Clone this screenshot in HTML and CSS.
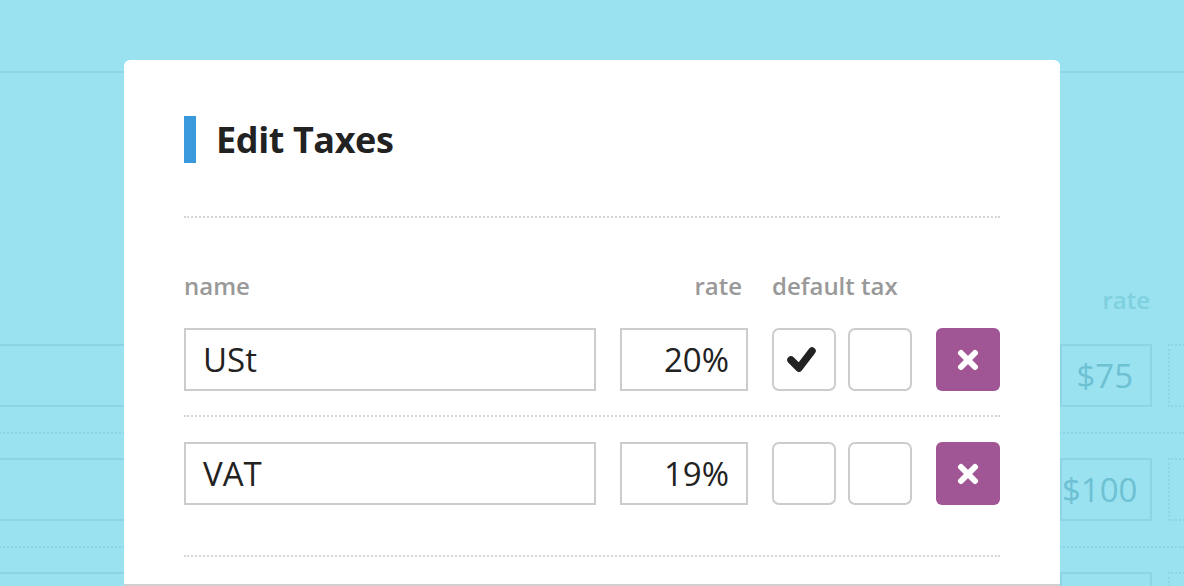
FILE: index.html
```html
<!DOCTYPE html>
<html lang="en">
<head>
<meta charset="utf-8">
<title>Edit Taxes</title>
<link rel="stylesheet" href="styles.css">
</head>
<body>
<div class="bg-page">
  <div class="bg-topbar"></div>
  <div class="bg-head"><span class="bg-label">rate</span></div>
  <div class="bg-row">
    <div class="bg-box"></div>
    <div class="bg-box bg-amount">$75</div>
    <div class="bg-box bg-dotted"></div>
  </div>
  <div class="bg-row">
    <div class="bg-box"></div>
    <div class="bg-box bg-amount">$100</div>
    <div class="bg-box bg-dotted"></div>
  </div>
  <div class="bg-row">
    <div class="bg-box"></div>
    <div class="bg-box bg-amount"></div>
    <div class="bg-box bg-dotted"></div>
  </div>
</div>

<div class="modal">
  <div class="modal-body">
    <h1 class="modal-title">Edit Taxes</h1>
    <div class="sep sep-head"></div>
    <div class="row labels">
      <span class="lbl col-name">name</span>
      <span class="lbl col-rate lbl-right">rate</span>
      <span class="lbl lbl-default">default tax</span>
    </div>
    <div class="row tax-row">
      <div class="field col-name">USt</div>
      <div class="field col-rate field-rate">20%</div>
      <div class="checks">
        <div class="check">
          <svg width="60" height="59" viewBox="2 2 60 59"><polyline points="19,32 27,40 40,23" fill="none" stroke="#222" stroke-width="7.5" stroke-linecap="round" stroke-linejoin="round"/></svg>
        </div>
        <div class="check"></div>
      </div>
      <div class="del">
        <svg width="22" height="22" viewBox="0 0 22 22"><path d="M4 4 L18 18 M18 4 L4 18" stroke="#fff" stroke-width="6" stroke-linecap="round"/></svg>
      </div>
    </div>
    <div class="sep sep-row"></div>
    <div class="row tax-row">
      <div class="field col-name">VAT</div>
      <div class="field col-rate field-rate">19%</div>
      <div class="checks">
        <div class="check"></div>
        <div class="check"></div>
      </div>
      <div class="del">
        <svg width="22" height="22" viewBox="0 0 22 22"><path d="M4 4 L18 18 M18 4 L4 18" stroke="#fff" stroke-width="6" stroke-linecap="round"/></svg>
      </div>
    </div>
    <div class="sep sep-last"></div>
  </div>
  <div class="modal-footer"></div>
</div>
</body>
</html>
```

FILE: styles.css
```css
html, body {
  margin: 0;
  padding: 0;
}
body {
  width: 1184px;
  height: 586px;
  overflow: hidden;
  background: #9ae2f0;
  font-family: "Open Sans", "Noto Sans", sans-serif;
  position: relative;
}

/* background page */
.bg-page {
  display: flex;
  flex-direction: column;
  height: 586px;
  overflow: hidden;
}
.bg-topbar {
  flex: none;
  height: 71px;
  border-bottom: 2px solid #8fd6e6;
}
.bg-head {
  flex: none;
  height: 271px;
  display: flex;
  justify-content: flex-end;
  padding-right: 34px;
  box-sizing: border-box;
  padding-top: 215px;
}
.bg-label {
  font-size: 24px;
  font-weight: 600;
  color: #80d0e0;
  line-height: 24px;
}
.bg-row {
  flex: none;
  display: flex;
  gap: 16px;
  margin-left: -4px;
  margin-bottom: 51px;
  position: relative;
}
.bg-row::after {
  content: "";
  position: absolute;
  left: 0;
  right: 0;
  bottom: -27px;
  border-top: 2px dotted #8cd5e5;
}
.bg-box {
  flex: none;
  width: 1048px;
  height: 63px;
  box-sizing: border-box;
  border: 2px solid #8dd5e5;
}
.bg-amount {
  width: 92px;
  text-align: right;
  padding-right: 17px;
  font-size: 33px;
  line-height: 59px;
  color: #6ec0d3;
}
.bg-dotted {
  width: 60px;
  border-style: dotted;
}

/* modal */
.modal {
  position: absolute;
  left: 124px;
  top: 60px;
  width: 936px;
  height: 526px;
  overflow: hidden;
  background: #fff;
  border-radius: 6px 6px 0 0;
}
.modal-body {
  padding: 56px 60px 0;
}
.modal-title {
  margin: 0;
  height: 47px;
  border-left: 12px solid #3a98dc;
  padding-left: 20px;
  font-size: 36px;
  font-weight: 700;
  line-height: 47px;
  color: #222;
  letter-spacing: -0.4px;
}
.sep {
  border-top: 2px dotted #d6d6d6;
}
.sep-head {
  margin-top: 53px;
}
.row {
  display: flex;
  gap: 24px;
}
.col-name {
  flex: none;
  width: 412px;
}
.col-rate {
  flex: none;
  width: 128px;
}
.checks {
  flex: none;
  display: flex;
  gap: 12px;
}
.labels {
  margin-top: 56px;
  margin-bottom: 30px;
  height: 24px;
}
.lbl {
  font-size: 24px;
  font-weight: 600;
  color: #999;
  line-height: 24px;
  white-space: nowrap;
  box-sizing: border-box;
}
.lbl-right {
  text-align: right;
  padding-right: 6px;
}
.tax-row {
  height: 63px;
}
.field {
  box-sizing: border-box;
  height: 63px;
  border: 2px solid #ccc;
  padding-left: 17px;
  font-size: 33px;
  line-height: 59px;
  color: #222;
}
.field-rate {
  text-align: right;
  padding-left: 0;
  padding-right: 17px;
}
.check {
  box-sizing: border-box;
  width: 64px;
  height: 63px;
  border: 2px solid #ccc;
  border-radius: 7px;
}
.check svg {
  display: block;
}
.del {
  flex: none;
  width: 64px;
  height: 63px;
  background: #a05594;
  border-radius: 6px;
  display: flex;
  align-items: center;
  justify-content: center;
}
.sep-row {
  margin-top: 24px;
  margin-bottom: 25px;
}
.sep-last {
  margin-top: 50px;
}
.modal-footer {
  margin-top: 27px;
  border-top: 2px solid #d0d0d0;
}
```
